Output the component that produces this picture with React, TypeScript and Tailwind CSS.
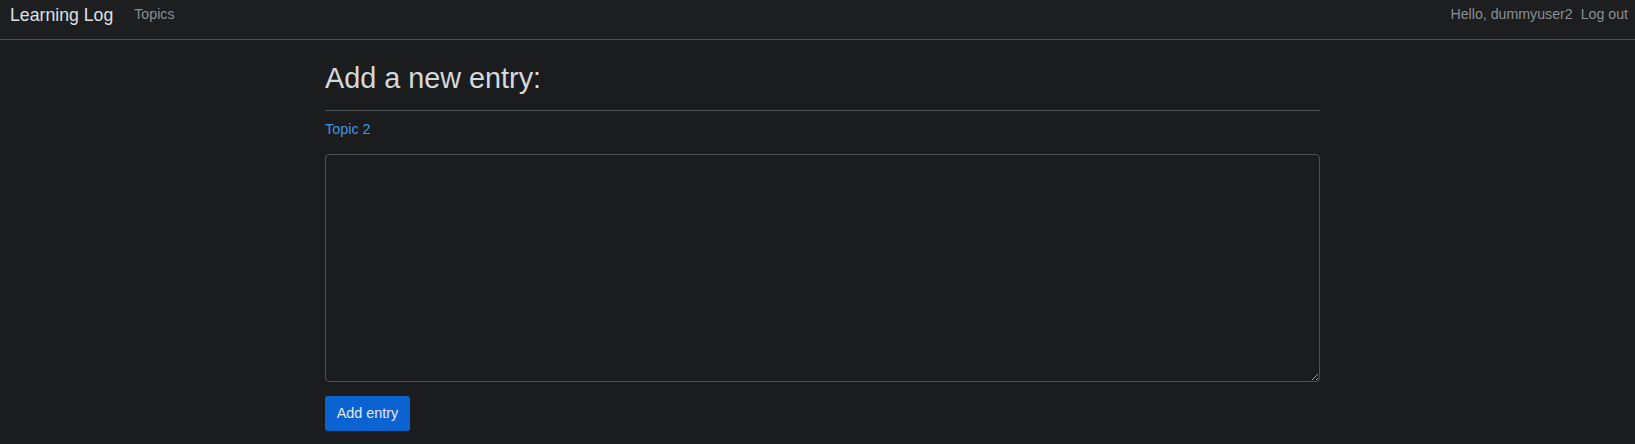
import React from "react";

const App = () => {
  return (
    <div className="min-h-[444px] bg-[#1b1c1e] font-['Liberation_Sans',Arial,sans-serif] text-[#dee2e6]">
      <nav className="flex h-[40px] items-start justify-between border-b border-[#4a4c4f] bg-[#1c1e20] pl-[10px] pr-[7px]">
        <div className="flex items-start">
          <a href="#" className="mt-[2px] text-[17.7px] leading-[27px] text-[#dee2e6]">
            Learning Log
          </a>
          <a href="#" className="ml-[21px] mt-[4px] text-[14.2px] leading-[21.6px] text-[#8b8f93]">
            Topics
          </a>
        </div>
        <div className="mt-[4px] flex items-start gap-[8px] text-[14.2px] leading-[21.6px] text-[#8b8f93]">
          <span>Hello, dummyuser2</span>
          <a href="#">Log out</a>
        </div>
      </nav>
      <div className="ml-[325px] w-[995px]">
        <h2 className="mt-[21px] text-[28.8px] font-normal leading-[1.2] text-[#d6d9dc]">
          Add a new entry:
        </h2>
        <hr className="mt-[14px] border-t border-[#505356]" />
        <a href="#" className="mt-[8px] block text-[14.4px] leading-[21.6px] text-[#3b97e3]">
          Topic 2
        </a>
        <textarea className="mt-[14px] block h-[228px] w-full rounded-[4px] border border-[#4d5054] bg-[#1b1c1e] text-[14.4px]"></textarea>
        <button className="mt-[14px] h-[35px] w-[85px] rounded-[3px] bg-[#0b63d1] text-[14.4px] text-[#e3e9f0]">
          Add entry
        </button>
      </div>
    </div>
  );
};

export default App;
